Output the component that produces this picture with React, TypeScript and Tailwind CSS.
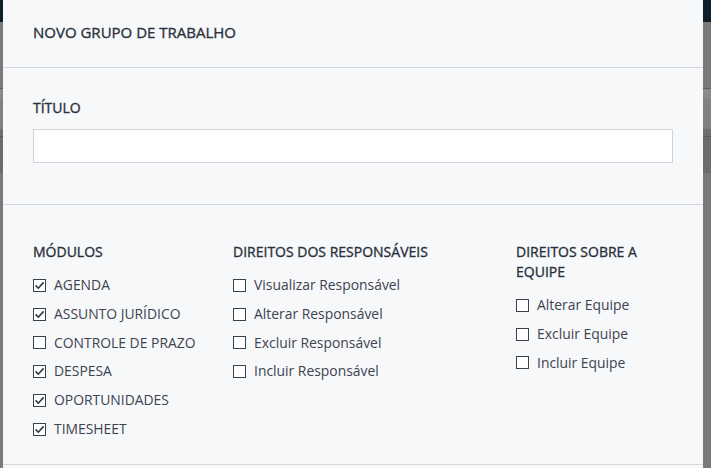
import React from "react";

const modulos = [
  { label: "AGENDA", checked: true },
  { label: "ASSUNTO JURÍDICO", checked: true },
  { label: "CONTROLE DE PRAZO", checked: false },
  { label: "DESPESA", checked: true },
  { label: "OPORTUNIDADES", checked: true },
  { label: "TIMESHEET", checked: true },
];

const responsaveis = [
  "Visualizar Responsável",
  "Alterar Responsável",
  "Excluir Responsável",
  "Incluir Responsável",
];

const equipe = ["Alterar Equipe", "Excluir Equipe", "Incluir Equipe"];

const Box = ({ checked }: { checked: boolean }) => (
  <svg width="13" height="13" viewBox="0 0 13 13" className="shrink-0">
    <rect x="0.5" y="0.5" width="12" height="12" fill="#ffffff" stroke="#3c424c" strokeWidth="1" />
    {checked && (
      <path d="M2.6 6.4 L5.3 9.2 L10.6 3.4" fill="none" stroke="#2f353e" strokeWidth="1.6" />
    )}
  </svg>
);

const Item = ({ label, checked = false }: { label: string; checked?: boolean }) => (
  <label className="flex h-[28.8px] items-center gap-[8px] text-[13.9px] text-[#3d4350]">
    <Box checked={checked} />
    <span>{label}</span>
  </label>
);

const Heading = ({ children }: { children: React.ReactNode }) => (
  <h3 className="mb-[9px] text-[14px] leading-[20px] font-normal text-[#2a313c] [-webkit-text-stroke:0.35px_#2a313c]">
    {children}
  </h3>
);

export default function App() {
  return (
    <div
      className="relative h-[468px] w-[711px] overflow-hidden bg-[#7b7b7b]"
      style={{ fontFamily: '"Open Sans", "Noto Sans", sans-serif' }}
    >
      {/* page behind the overlay */}
      <div className="flex h-full flex-col">
        <div className="h-[22px] bg-[#0f1f2a]" />
        <div className="h-[66px] bg-[#7a7a7a]" />
        <div className="h-[1px] bg-[#5f5f5f]" />
        <div className="h-[10px] bg-[#8a8a8a]" />
        <div className="h-[30px] bg-[#808080]" />
        <div className="h-[7px] bg-[#6f6f6f]" />
        <div className="h-[1px] bg-[#5a5a5a]" />
        <div className="h-[36px] bg-[#6c6c6c]" />
        <div className="flex-1 bg-[#7a7a7a]" />
      </div>

      {/* modal */}
      <div className="absolute top-0 left-[3px] h-[520px] w-[700px] bg-[#f7f8fa]">
        <div className="flex h-[68px] items-center border-b border-[#d3d6db] px-[30px] pb-[2px]">
          <h2 className="text-[15px] font-normal text-[#2a313c] [-webkit-text-stroke:0.35px_#2a313c]">
            NOVO GRUPO DE TRABALHO
          </h2>
        </div>

        <div className="border-b border-[#d3d6db] px-[30px] pt-[30px] pb-[41px]">
          <div className="mb-[11px] text-[14px] leading-[20px] text-[#2a313c] [-webkit-text-stroke:0.35px_#2a313c]">
            TÍTULO
          </div>
          <input
            type="text"
            className="block h-[34px] w-full border border-[#cfd3d9] bg-white px-2 text-[13px] outline-none"
          />
        </div>

        <div className="grid grid-cols-[200px_283px_1fr] border-b border-[#d3d6db] px-[30px] pt-[37px] pb-[20px]">
          <div>
            <Heading>MÓDULOS</Heading>
            {modulos.map((m) => (
              <Item key={m.label} label={m.label} checked={m.checked} />
            ))}
          </div>
          <div>
            <Heading>DIREITOS DOS RESPONSÁVEIS</Heading>
            {responsaveis.map((r) => (
              <Item key={r} label={r} />
            ))}
          </div>
          <div>
            <Heading>DIREITOS SOBRE A EQUIPE</Heading>
            {equipe.map((e) => (
              <Item key={e} label={e} />
            ))}
          </div>
        </div>
      </div>
    </div>
  );
}
